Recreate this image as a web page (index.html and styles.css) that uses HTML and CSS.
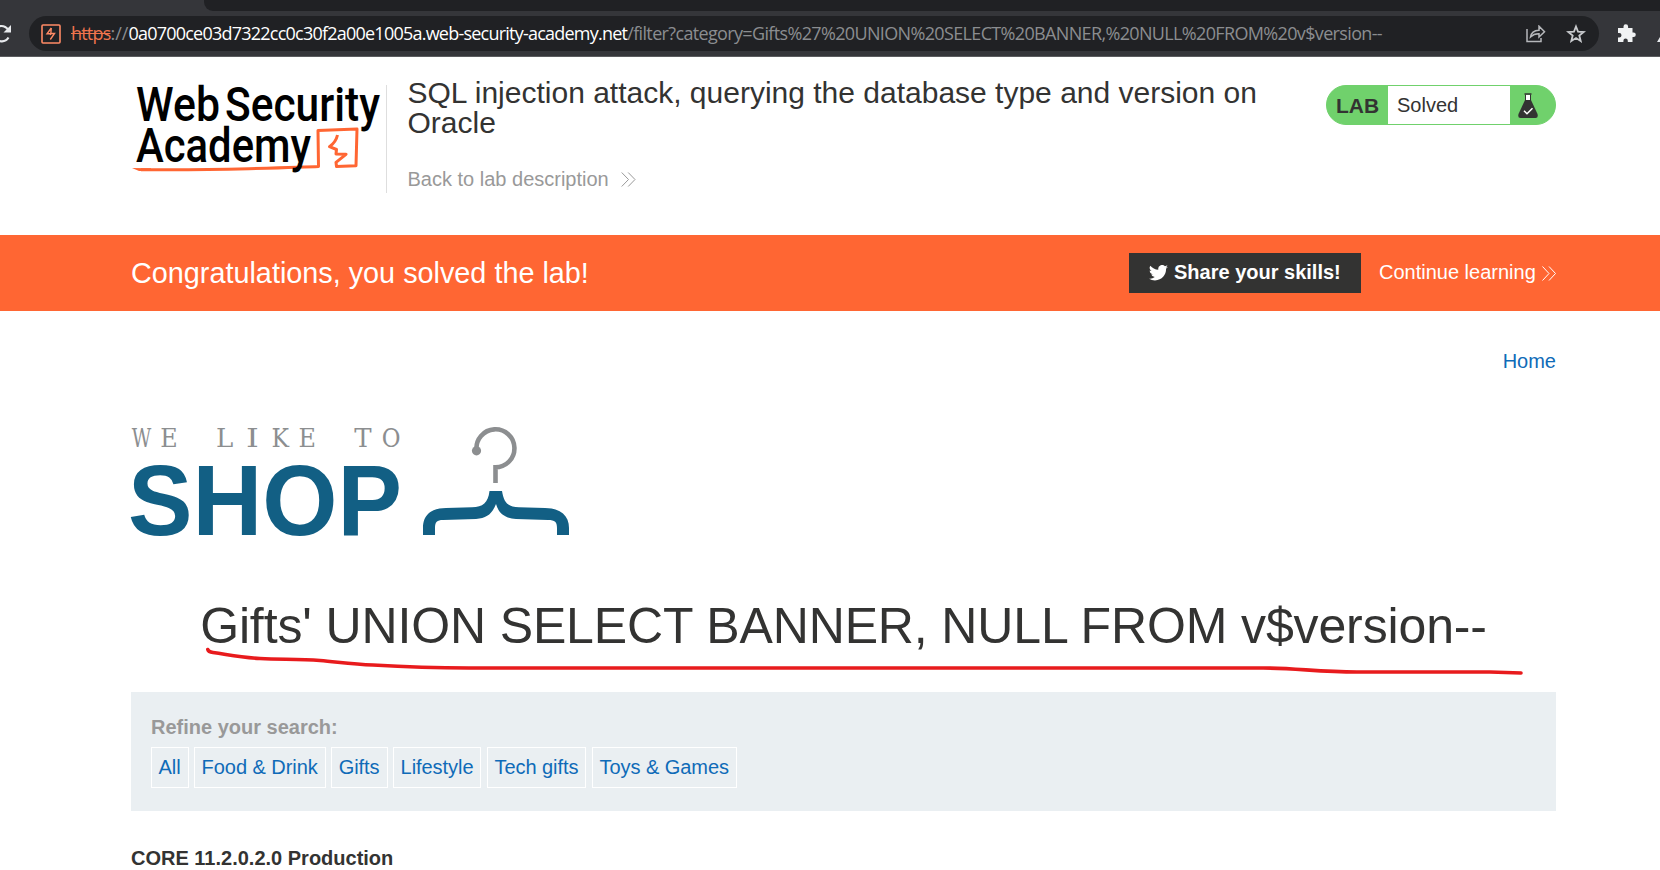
FILE: index.html
```html
<!DOCTYPE html>
<html lang="en">
<head>
<meta charset="utf-8">
<title>SQL injection attack, querying the database type and version on Oracle</title>
<link rel="stylesheet" href="styles.css">
</head>
<body>
<div class="browser">
  <div class="tabstrip"><div class="tabstrip-rest"></div></div>
  <div class="toolbar">
    <svg class="reload" width="12" height="20" viewBox="0 0 12 20"><path d="M-2 16.500Q5 19 8.500 13.500M-3 3Q4 0 8.500 6" fill="none" stroke="#e8eaed" stroke-width="2.200"/><path d="M11 1V8.500H3.500Z" fill="#e8eaed"/></svg>
    <div class="address">
      <svg class="favicon" width="20" height="20" viewBox="0 0 20 20"><rect x="1" y="1" width="18" height="18" rx="1" fill="none" stroke="#ff8a65" stroke-width="1.600"/><path d="M10.300 4L6 9.800H10L9.300 11M9.300 15.500L13.500 9.500H9.800L10.300 4" fill="none" stroke="#ff8a65" stroke-width="1.400"/></svg>
      <div class="url"><span class="scheme">https</span><span class="slashes">://</span><span class="host">0a0700ce03d7322cc0c30f2a00e1005a.web-security-academy.net</span><span class="path">/filter?category=Gifts%27%20UNION%20SELECT%20BANNER,%20NULL%20FROM%20v$version--</span></div>
      <svg class="share" width="20" height="18" viewBox="0 0 20 18" fill="none" stroke="#b5b7ba" stroke-width="1.500"><path d="M1 4V16.500H15V13M4.500 12Q5.500 5.500 13 5.200V1.200L18.500 6.800L13 12V8.800Q8 8.600 4.500 12Z"/></svg>
      <svg class="star" width="20" height="20" viewBox="0 0 20 20"><path d="M10 2.500L12 7.600L17.700 8L13.300 11.600L14.700 17L10 14L5.300 17L6.700 11.600L2.300 8L8 7.600Z" fill="none" stroke="#c8cacd" stroke-width="1.800"/></svg>
    </div>
    <svg class="puzzle" width="20" height="20" viewBox="0 0 20 20"><path d="M2 4H6.500V2.500A2.300 2.300 0 0 1 11.100 2.500V4H15.500V8.500H16.500A2.300 2.300 0 0 1 16.500 13.100H15.500V18H10.800V16.800A2.200 2.200 0 0 0 6.400 16.800V18H1V13.500H2.300A2.200 2.200 0 0 0 2.300 9.100H1V4Z" fill="#f1f3f4"/></svg>
    <svg class="pen" width="3" height="6" viewBox="0 0 3 6"><path d="M0 5L3 0V5Z" fill="#e8eaed"/></svg>
  </div>
</div>

<header class="lab-header container">
  <svg class="wsa-logo" width="255" height="100" viewBox="0 0 255 100">
    <g fill="none" stroke="#ff6633" stroke-width="3" stroke-linejoin="round"><path d="M10 84.700Q60 85.300 118 83.700T187.500 81.500L187 45.500L226 44L225 80.800L205.500 81.500L205 77.300L215 69.300L205 69L205.500 64.500L198.500 61.700Q205 57 206.500 50"/></g>
    <path d="M1 83L20 83.300V86H8Z" fill="#ff6633"/>
    <g class="wsa-text"><text x="5" y="36" textLength="84" lengthAdjust="spacingAndGlyphs">Web</text><text x="94" y="36" textLength="155" lengthAdjust="spacingAndGlyphs">Security</text><text x="5" y="77" textLength="175" lengthAdjust="spacingAndGlyphs">Academy</text></g>
  </svg>
  <div class="title-box">
    <h2>SQL injection attack, querying the database type and version on<br>Oracle</h2>
    <a class="back">Back to lab description<svg width="15" height="15" viewBox="0 0 15 15"><path d="M.7 .5L7.500 7.500L.7 14.500M7.200 .5L14 7.500L7.200 14.500" fill="none" stroke="currentColor"/></svg></a>
  </div>
  <div class="status">
    <b>LAB</b><span>Solved</span>
    <svg width="20" height="25" viewBox="0 0 20 25"><path d="M6.500 1H13.500" stroke="#333332" stroke-width="1.500"/><path d="M7.500 1.500V7M12.500 1.500V7" stroke="#333332"/><path d="M8 2H12V7H8Z" fill="#fff"/><path d="M7 7H13L19.500 21Q20.500 25 17.500 25H2.500Q-.5 25 .5 21Z" fill="#333332"/><path d="M6 17.800L9 20.700L14.500 15.300" fill="none" stroke="#fff" stroke-width="1.500"/></svg>
  </div>
</header>

<section class="banner"><div class="container banner-in">
  <h4>Congratulations, you solved the lab!</h4>
  <a class="share-btn"><svg width="19" height="17" viewBox="0 3 24 20"><path fill="#fff" d="M23.950 4.570a10 10 0 0 1-2.820.77 4.960 4.960 0 0 0 2.160-2.720c-.95.550-2 .95-3.130 1.180a4.920 4.920 0 0 0-8.380 4.480C7.690 8.100 4.070 6.130 1.640 3.160a4.920 4.920 0 0 0 1.520 6.570 4.900 4.900 0 0 1-2.230-.61v.06a4.920 4.920 0 0 0 3.950 4.830 5 5 0 0 1-2.210.08 4.940 4.940 0 0 0 4.600 3.420A9.870 9.870 0 0 1 0 19.540a14 14 0 0 0 7.550 2.210c9.050 0 14-7.500 14-13.980l-.02-.64a9.940 9.940 0 0 0 2.420-2.560z"/></svg><span>Share your skills!</span></a>
  <a class="continue"><span>Continue learning</span><svg width="14" height="15" viewBox="0 0 14 15"><path d="M.5 .5L7 7.500L.5 14.500M7 .5L13.500 7.500L7 14.500" fill="none" stroke="currentColor"/></svg></a>
</div></section>

<main class="container">
  <nav><a>Home</a></nav>
  <svg class="shop-logo" width="440" height="112" viewBox="0 0 440 112">
    <g class="like"><text transform="translate(10.500 19.500) scale(.73 1)">W</text><text transform="translate(38 19.500) scale(.92 1)">E</text><text transform="translate(93.700 19.500) scale(1 1)">L</text><text transform="translate(121.300 19.500) scale(1.250 1)">I</text><text transform="translate(149.300 19.500) scale(.9 1)">K</text><text transform="translate(176.300 19.500) scale(.92 1)">E</text><text transform="translate(232 19.500)">T</text><text transform="translate(260 19.500) scale(.88 1)">O</text></g>
    <text class="shop" x="-3" y="108.300" textLength="274" lengthAdjust="spacingAndGlyphs">SHOP</text>
    <path d="M345.500 24V23A19 19 0 1 1 364.500 40.300V56" fill="none" stroke="#8c8e90" stroke-width="4.600"/>
    <circle cx="345.500" cy="23.800" r="4.600" fill="#8c8e90"/>
    <path transform="translate(0 10)" d="M358.500 54H371C373 66 377 70 388 70.300L414 71C430 71 438 79 438 91V98H426V91C426 85 424 83 417 83L385 82C374 81 368 77 365 67C361 77 356 81 345 82L312 83C306 83 304 85 304 91V98H292V91C292 79 299 71 315 71L341 70.300C352 70 357 66 358.500 54Z" fill="#125f84"/>
  </svg>
  <div class="result-title">
    <h1>Gifts' UNION SELECT BANNER, NULL FROM v$version--</h1>
    <svg class="underline" width="1320" height="32" viewBox="0 0 1320 32"><path d="M7.800 3.500Q8.500 6 13 6.500C30 9 39 11.500 60 12.500C82 13.500 99 13 120 14.500C138 16 152 18 173 19C206 21 233 22 269 22H1063C1096 22 1118 26 1157 26H1290L1321 27" fill="none" stroke="#e81b1d" stroke-width="3.600" stroke-linecap="round" stroke-linejoin="round"/></svg>
  </div>
  <section class="filters">
    <label>Refine your search:</label>
    <div class="tags"><a>All</a><a>Food &amp; Drink</a><a>Gifts</a><a>Lifestyle</a><a>Tech gifts</a><a>Toys &amp; Games</a></div>
  </section>
  <div class="row">CORE 11.2.0.2.0 Production</div>
</main>
</body>
</html>
```

FILE: styles.css
```css
* { box-sizing: border-box; }
body { margin: 0; height: 870px; overflow: hidden; background: #fff; color: #333332; font: 20px/24px "Liberation Sans", Arial, sans-serif; }
svg { display: block; flex: none; }
h1, h2, h4 { margin: 0; font-weight: 400; }
.container { width: 1425px; margin-left: 131px; }
.browser { height: 57px; background: #35363a; border-bottom: 1px solid #5b5c5f; }
.tabstrip { height: 11px; padding-left: 204px; }
.tabstrip-rest { height: 11px; background: #202124; border-bottom-left-radius: 9px; }
.toolbar { display: flex; align-items: center; height: 45px; }
.reload { margin-right: 17px; }
.address { display: flex; align-items: center; width: 1570px; height: 35px; border-radius: 18px; background: #202124; padding: 0 13px 0 12px; }
.url { width: 1475px; padding: 0 0 1px 10px; font: 18px/24px "Open Sans", "Noto Sans", sans-serif; white-space: nowrap; color: #8b8d90; }
.scheme { color: #f0744d; text-decoration: line-through; letter-spacing: -.8px; }
.host { color: #fff; letter-spacing: -.77px; }
.path { letter-spacing: -.65px; }
.share { margin-left: 3px; }
.star { margin-left: 20px; }
.puzzle { margin-left: 18px; }
.pen { margin: 12px 0 0 auto; }

.lab-header { display: flex; height: 178px; padding-top: 28px; }
.wsa-logo { overflow: visible; }
.wsa-text { font: 500 47.500px Roboto, sans-serif; fill: #000; }
.title-box { width: 940px; height: 108px; border-left: 1px solid #dedede; padding-left: 20.500px; }
h2 { font-size: 30px; line-height: 30px; margin-top: -7px; white-space: nowrap; }
.back { display: flex; align-items: center; margin-top: 29px; color: #999; }
.back svg { margin-left: 12px; }
.status { display: flex; align-items: center; width: 230px; height: 40px; border: 1px solid #70d16c; border-radius: 20px; background: #70d16c; }
.status b { width: 61px; padding: 1px 0 0 9px; font-size: 21px; }
.status span { width: 122px; height: 38px; padding-left: 9px; background: #fff; line-height: 38px; }
.status svg { margin-left: 8px; }

.banner { height: 76px; background: #ff6633; color: #fff; }
.banner-in { display: flex; align-items: center; height: 76px; }
h4 { font-size: 28.800px; line-height: 32px; }
.share-btn { display: flex; align-items: center; width: 232px; height: 40px; margin-left: auto; padding-left: 20px; background: #333332; font-weight: 700; white-space: nowrap; }
.share-btn svg { margin-right: 6px; }
.share-btn span, .continue span { padding-bottom: 2px; }
.continue { display: flex; align-items: center; width: 177px; margin-left: 18px; justify-content: space-between; white-space: nowrap; }

nav { display: flex; justify-content: flex-end; padding-top: 38px; height: 116px; color: #0f6bb8; }
.shop-logo { overflow: visible; }
.like { font: 26px "DejaVu Serif", serif; fill: #8c8e90; text-anchor: middle; }
.shop { font: bold 100px "Liberation Sans", Arial, sans-serif; fill: #125f84; }
.result-title { position: relative; height: 153px; padding-top: 58px; text-align: center; }
h1 { font-size: 50px; line-height: 58px; white-space: nowrap; letter-spacing: -.13px; }
.underline { position: absolute; left: 69px; top: 107px; overflow: visible; }
.filters { height: 119px; padding: 23px 20px 0; background: #eaeff2; }
.filters label { display: block; color: #999; font-weight: 700; }
.tags { display: flex; gap: 5.500px; margin-top: 8px; }
.tags a { height: 41px; padding: 0 7px 0 6.500px; border: 1px solid #fff; line-height: 38px; color: #0f6bb8; letter-spacing: -.05px; }
.row { margin-top: 35px; font-weight: 700; }
```
